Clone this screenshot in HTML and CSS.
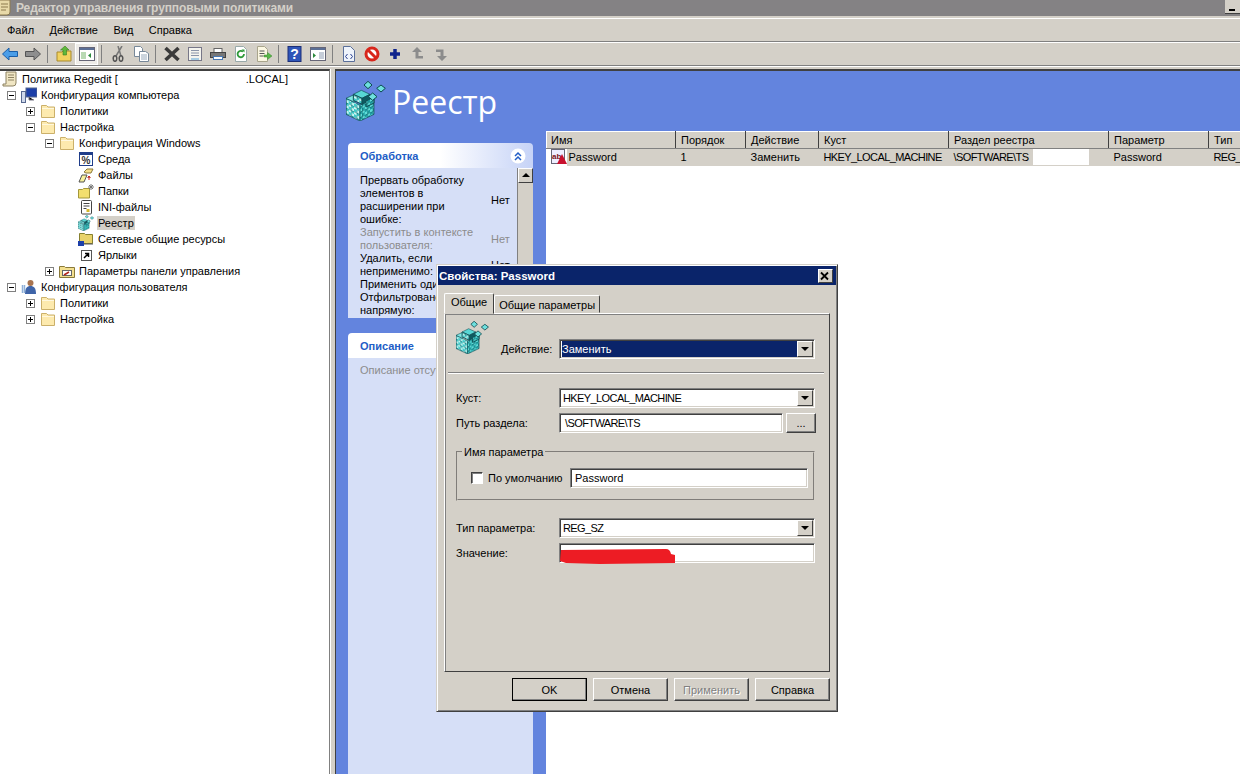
FILE: index.html
```html
<!DOCTYPE html>
<html>
  <head>
    <title>Редактор управления групповыми политиками</title>
    <meta charset="utf-8" />
    <link rel="stylesheet" href="styles.css">
  </head>
  <body>
    <svg class="sprite" width="0" height="0">
      <defs>
        <pattern id="chk-l" width="16" height="16" patternUnits="userSpaceOnUse" patternTransform="skewY(25)">
          <rect width="16" height="16" fill="#c4f6f2"/>
          <rect width="8" height="8" fill="#3ccaca"/>
          <rect x="8" y="8" width="8" height="8" fill="#3ccaca"/>
          <path d="M0 0H16M0 0V16" stroke="#0d4a50" stroke-width="2"/>
        </pattern>
        <pattern id="chk-r" width="16" height="16" patternUnits="userSpaceOnUse" patternTransform="skewY(-25)">
          <rect width="16" height="16" fill="#1d9ea2"/>
          <rect width="8" height="8" fill="#5fdcd8"/>
          <rect x="8" y="8" width="8" height="8" fill="#5fdcd8"/>
          <path d="M0 0H16M0 0V16" stroke="#0d4a50" stroke-width="2"/>
        </pattern>
      </defs>
      <symbol id="folder" viewBox="0 0 16 16">
        <path d="M1.500 2.500h5l1.500 1.500h6.500v10.500h-13z" fill="#fdeaae" stroke="#cbb06a"/>
        <path d="M2 5.500h12" stroke="#fff8de"/>
      </symbol>
      <symbol id="reg" viewBox="0 0 120 120">
        <path d="M0 52L42 72V120L0 100z" fill="url(#chk-l)" stroke="#0d4a50" stroke-width="2"/>
        <path d="M42 72L84 52V100L42 120z" fill="url(#chk-r)" stroke="#0d4a50" stroke-width="2"/>
        <path d="M0 52L22 42L42 52L22 62z" fill="#7fe6e2" stroke="#0d4a50" stroke-width="2"/>
        <path d="M22 40L46 28L72 40L48 52z" fill="#58d6d4" stroke="#0d4a50" stroke-width="2"/>
        <path d="M22 40V58L48 70V52z" fill="url(#chk-l)" stroke="#0d4a50" stroke-width="3"/>
        <path d="M48 52V70L72 58V40z" fill="#0d5a60" stroke="#0d4a50" stroke-width="2"/>
        <path d="M60 60L84 48V66L60 78z" fill="url(#chk-r)" stroke="#0d4a50" stroke-width="3"/>
        <path d="M80 36l13 11l-13 11l-13-11zM66 1l12 11l-12 11l-12-11zM105 12l13 10l-13 11l-13-11z" fill="#6ee0de" stroke="#0d4a50" stroke-width="3"/>
      </symbol>
    </svg>

    <div class="titlebar">
      <svg class="title-icon" viewBox="0 0 16 16"><path d="M3 0h11v12a3 3 0 0 1-3 3H0v-2h2z" fill="#e8d9a8" stroke="#8d7b4f"/><path d="M5 4h7M5 7h7M5 10h5" stroke="#8d7b4f"/></svg>
      <span class="title-text">Редактор управления групповыми политиками</span>
      <span class="min-btn"></span>
    </div>
    <div class="menubar">
      <span class="menu-item">Файл</span>
      <span class="menu-item">Действие</span>
      <span class="menu-item">Вид</span>
      <span class="menu-item">Справка</span>
    </div>
    <div class="toolbar">
      <span class="tool"><svg viewBox="0 0 16 16"><path d="M0.500 8L7 2v3.500h8.500v5H7V14z" fill="#4b9ee8" stroke="#1a5ea8"/></svg></span>
      <span class="tool"><svg viewBox="0 0 16 16"><path d="M15.500 8L9 2v3.500H0.500v5H9V14z" fill="#8e8e8e" stroke="#555"/></svg></span>
      <span class="tool-sep"></span>
      <span class="tool"><svg viewBox="0 0 16 16"><path d="M1 6h5l1-1h8v10H1z" fill="#f2d25f" stroke="#a98a2c"/><path d="M7 9V4H4.500L9 0l4 4h-2.500v5z" fill="#5fb83c" stroke="#3a7d1f" stroke-width=".6"/></svg></span>
      <span class="tool tool-on"><svg viewBox="0 0 16 16"><rect x="0.500" y="1.500" width="15" height="13" fill="#fff" stroke="#667"/><rect x="1" y="2" width="14" height="2" fill="#5b6f96"/><rect x="2" y="6" width="5" height="7" fill="#b9d9b4"/><path d="M12 7v5l-3-2.500z" fill="#2c8a3c"/></svg></span>
      <span class="tool-sep"></span>
      <span class="tool"><svg viewBox="0 0 16 16"><path d="M12 0L6 10M8 0l3 10" stroke="#777" stroke-width="1.500"/><ellipse cx="5" cy="12.500" rx="1.800" ry="2.800" fill="none" stroke="#555" stroke-width="1.500"/><ellipse cx="11" cy="12.500" rx="1.800" ry="2.800" fill="none" stroke="#555" stroke-width="1.500"/></svg></span>
      <span class="tool"><svg viewBox="0 0 16 16"><path d="M1.500 0.500h6l2 2v8h-8z" fill="#fff" stroke="#789"/><path d="M6.500 5.500h6l3 2v8h-9z" fill="#fff" stroke="#789"/><path d="M8 9h6M8 11h6M8 13h6" stroke="#9ab"/></svg></span>
      <span class="tool-sep"></span>
      <span class="tool"><svg viewBox="0 0 16 16"><path d="M1.500 2L14.500 14M14.500 2L1.500 14" stroke="#3a3a3a" stroke-width="3.600"/></svg></span>
      <span class="tool"><svg viewBox="0 0 16 16"><rect x="1.500" y="1.500" width="13" height="13" fill="#f4f4ee" stroke="#778"/><path d="M4 4.500h8M4 7h8M4 9.500h8" stroke="#8a94a8"/><path d="M4 13h8" stroke="#5aa5d8"/></svg></span>
      <span class="tool"><svg viewBox="0 0 16 16"><rect x="4" y="2.500" width="8" height="4" fill="#fff" stroke="#666"/><rect x="0.500" y="6.500" width="15" height="5" fill="#777" stroke="#444"/><rect x="3.500" y="10.500" width="9" height="3" fill="#fff" stroke="#4a7ab5"/></svg></span>
      <span class="tool"><svg viewBox="0 0 16 16"><path d="M2.500 0.500h8l3 3v12h-11z" fill="#fff" stroke="#9aa"/><path d="M11 8a3.200 3.200 0 1 1-1-2.300" fill="none" stroke="#2f9a3a" stroke-width="1.800"/><path d="M8.500 3.500h3v3z" fill="#2f9a3a"/></svg></span>
      <span class="tool"><svg viewBox="0 0 16 16"><path d="M1.500 0.500h7l3 3v12h-10z" fill="#fbf7e2" stroke="#a9a58c"/><path d="M3.500 5h5M3.500 7.500h5M3.500 10h4" stroke="#555"/><path d="M8 9h3.500V6.500L16 10l-4.500 3.500V11H8z" fill="#58b848" stroke="#3c8a30" stroke-width=".5"/></svg></span>
      <span class="tool-sep"></span>
      <span class="tool"><svg viewBox="0 0 16 16"><rect x="1" y="0.500" width="13" height="15" fill="#2f55b8" stroke="#1c2f78"/><text x="7.500" y="13" class="help-mark">?</text></svg></span>
      <span class="tool"><svg viewBox="0 0 16 16"><rect x="0.500" y="1.500" width="15" height="13" fill="#fff" stroke="#667"/><rect x="1" y="2" width="14" height="2" fill="#5b6f96"/><rect x="9" y="6" width="5" height="7" fill="#c6cdd8"/><path d="M3 7v5l3-2.500z" fill="#2c8a3c"/></svg></span>
      <span class="tool-sep"></span>
      <span class="tool"><svg viewBox="0 0 16 16"><path d="M2.500 0.500h7l4 4v11h-11z" fill="#eef3fb" stroke="#5a6f9a"/><path d="M6.500 8L4.500 10.500l2 2.500M9.500 8l2 2.500l-2 2.500" fill="none" stroke="#2a3f8f"/></svg></span>
      <span class="tool"><svg viewBox="0 0 16 16"><circle cx="8" cy="8" r="6" fill="#fff" stroke="#d8261c" stroke-width="3"/><path d="M4 4l8 8" stroke="#d8261c" stroke-width="3"/></svg></span>
      <span class="tool"><svg viewBox="0 0 16 16"><path d="M8 3v10M3 8h10" stroke="#10248c" stroke-width="3.500"/></svg></span>
      <span class="tool"><svg viewBox="0 0 16 16"><path d="M7 1L2 6h3.500v6.500H13V10H8.500V6H12z" fill="#8c8c8c"/></svg></span>
      <span class="tool"><svg viewBox="0 0 16 16"><path d="M9 15l5-5h-3.500V3.500H3V6h4.500v4H4z" fill="#8c8c8c"/></svg></span>
    </div>

    <div class="main">
      <div class="tree">
        <div class="row row-root">
          <svg class="ico" viewBox="0 0 16 16"><path d="M4 1h10v11a3 3 0 0 1-3 3H1v-2h3z" fill="#f0e6c4" stroke="#8d8262"/><path d="M6 4h6M6 6.500h6M6 9h6" stroke="#8d8262"/></svg>
          <span>Политика Regedit [<span class="blank"></span>.LOCAL]</span>
        </div>
        <div class="row lvl0"><span class="exp"></span>
          <svg class="ico" viewBox="0 0 16 16"><rect x="5" y="1" width="11" height="9" fill="#1c3fa8" stroke="#56688f"/><path d="M8 10v3h5" stroke="#778"/><rect x="0.500" y="4.500" width="4" height="11" fill="#cfd8ea" stroke="#56688f"/></svg>
          <span>Конфигурация компьютера</span></div>
        <div class="row lvl1"><span class="exp exp-plus"></span><svg class="ico"><use href="#folder"/></svg><span>Политики</span></div>
        <div class="row lvl1"><span class="exp"></span><svg class="ico"><use href="#folder"/></svg><span>Настройка</span></div>
        <div class="row lvl2"><span class="exp"></span><svg class="ico"><use href="#folder"/></svg><span>Конфигурация Windows</span></div>
        <div class="row lvl3"><span class="exp exp-none"></span>
          <svg class="ico" viewBox="0 0 16 16"><rect x="1.500" y="1.500" width="13" height="13" fill="#fff" stroke="#1f3d8a"/><rect x="2" y="2" width="12" height="2" fill="#1f3d8a"/><text x="8" y="13" class="pct">%</text></svg>
          <span>Среда</span></div>
        <div class="row lvl3"><span class="exp exp-none"></span>
          <svg class="ico" viewBox="0 0 16 16"><path d="M1 15l3-7h5l-3 7z" fill="#f6ef9a" stroke="#555"/><path d="M6 5l3-3h6l-2 4H8z" fill="#f6df8a" stroke="#8a7a3a"/><path d="M11 9v4M9.500 10.500L11 9l1.500 1.500" stroke="#d8261c"/></svg>
          <span>Файлы</span></div>
        <div class="row lvl3"><span class="exp exp-none"></span>
          <svg class="ico" viewBox="0 0 16 16"><path d="M0.500 6.500h4l1-1h6v9.500h-11z" fill="#f2df6e" stroke="#a4983a"/><path d="M13 1v6M10 4h6M11 2l4 4M15 2l-4 4" stroke="#777"/></svg>
          <span>Папки</span></div>
        <div class="row lvl3"><span class="exp exp-none"></span>
          <svg class="ico" viewBox="0 0 16 16"><rect x="3.500" y="1.500" width="10" height="13.500" rx="1" fill="#fff" stroke="#444"/><path d="M5.500 4.500h6M5.500 7h6M5.500 9.500h3" stroke="#444"/><rect x="8.500" y="10" width="3" height="3" fill="#d4b72a"/></svg>
          <span>INI-файлы</span></div>
        <div class="row lvl3"><span class="exp exp-none"></span><svg class="ico"><use href="#reg"/></svg><span class="sel">Реестр</span></div>
        <div class="row lvl3"><span class="exp exp-none"></span>
          <svg class="ico" viewBox="0 0 16 16"><path d="M1.500 2.500h5l1 1h7v9h-13z" fill="#e9d36a" stroke="#86802f"/><rect x="0" y="10" width="6" height="5" fill="#1c3fa8"/><path d="M6 13h9" stroke="#555"/></svg>
          <span>Сетевые общие ресурсы</span></div>
        <div class="row lvl3"><span class="exp exp-none"></span>
          <svg class="ico" viewBox="0 0 16 16"><rect x="3.500" y="3.500" width="10" height="10" fill="#fff" stroke="#555"/><path d="M6 11l4-4M7 6.500h3.500V10" fill="none" stroke="#000" stroke-width="1.500"/></svg>
          <span>Ярлыки</span></div>
        <div class="row lvl2"><span class="exp exp-plus"></span>
          <svg class="ico" viewBox="0 0 16 16"><path d="M0.500 3.500h5l1 1h9v10h-15z" fill="#f3df8f" stroke="#8a7a3a"/><rect x="3.500" y="7.500" width="9" height="5" fill="#fff" stroke="#666"/><path d="M5 12l5-3" stroke="#b3261c" stroke-width="1.500"/></svg>
          <span>Параметры панели управления</span></div>
        <div class="row lvl0"><span class="exp"></span>
          <svg class="ico" viewBox="0 0 16 16"><circle cx="9.500" cy="4" r="3" fill="#a8744f"/><path d="M4 15c0-6 2-8 5.500-8s5.500 2 5.500 8z" fill="#3f64a8"/><path d="M1.500 6v8M3.500 6v8" stroke="#8fb0d8" stroke-width="1.500"/></svg>
          <span>Конфигурация пользователя</span></div>
        <div class="row lvl1"><span class="exp exp-plus"></span><svg class="ico"><use href="#folder"/></svg><span>Политики</span></div>
        <div class="row lvl1"><span class="exp exp-plus"></span><svg class="ico"><use href="#folder"/></svg><span>Настройка</span></div>
      </div>
      <div class="splitter"></div>
      <div class="panel">
        <div class="panel-head">
          <svg class="head-icon"><use href="#reg"/></svg>
          <h1>Реестр</h1>
        </div>
        <div class="panel-body">
          <div class="tasks">
            <div class="task-head">
              <span>Обработка</span>
              <span class="chevron"><svg viewBox="0 0 16 16"><circle cx="8" cy="8" r="7.500" fill="#fff"/><path d="M5 8l3-3l3 3M5 12l3-3l3 3" fill="none" stroke="#215dc6" stroke-width="1.500"/></svg></span>
            </div>
            <div class="task-body">
              <div class="props">
                <div class="prop"><span class="prop-name">Прервать обработку элементов в расширении при ошибке:</span><span class="prop-val">Нет</span></div>
                <div class="prop prop-off"><span class="prop-name">Запустить в контексте пользователя:</span><span class="prop-val">Нет</span></div>
                <div class="prop"><span class="prop-name">Удалить, если неприменимо:</span><span class="prop-val">Нет</span></div>
                <div class="prop"><span class="prop-name prop-cut">Применить один раз:</span></div>
                <div class="prop"><span class="prop-name">Отфильтровано напрямую:</span></div>
              </div>
              <div class="scroll">
                <span class="scroll-btn"></span>
              </div>
            </div>
            <div class="task-head task-head2"><span>Описание</span></div>
            <div class="desc">Описание отсутствует</div>
          </div>
          <div class="list">
            <table>
              <colgroup>
                <col class="c-name"><col class="c-order"><col class="c-act"><col class="c-hive"><col class="c-key"><col class="c-param"><col class="c-type">
              </colgroup>
              <thead>
                <tr><th>Имя</th><th>Порядок</th><th>Действие</th><th>Куст</th><th>Раздел реестра</th><th>Параметр</th><th>Тип</th></tr>
              </thead>
              <tbody>
                <tr>
                  <td class="td-name"><span class="row-icon"><svg viewBox="0 0 16 16"><rect x="0.500" y="0.500" width="13" height="14" fill="#eef" stroke="#667"/><text x="1" y="10" class="ab">ab</text><path d="M11 5l5 10H6z" fill="#c8102e"/></svg></span><span class="name-text">Password</span></td>
                  <td>1</td><td>Заменить</td><td class="caps">HKEY_LOCAL_MACHINE</td>
                  <td class="caps">\SOFTWARE\TS<span class="smear"></span></td><td>Password</td><td class="caps">REG_SZ</td>
                </tr>
              </tbody>
            </table>
          </div>
        </div>
      </div>
    </div>

    <div class="dialog">
      <div class="dlg-title"><span>Свойства: Password</span><span class="dlg-close"><svg viewBox="0 0 12 12"><path d="M2 2.500L9 9.500M9 2.500L2 9.500" stroke="#000" stroke-width="1.800"/></svg></span></div>
      <div class="tabs">
        <span class="tab tab-on">Общие</span>
        <span class="tab">Общие параметры</span>
      </div>
      <div class="tab-panel">
        <div class="action-row">
          <svg class="act-icon"><use href="#reg"/></svg>
          <label class="act-label">Действие:</label>
          <div class="combo combo-sel"><span class="combo-text">Заменить</span><span class="arrow"></span></div>
        </div>
        <div class="sep"></div>
        <div class="form-row form-first"><label>Куст:</label><div class="combo"><span class="combo-text caps">HKEY_LOCAL_MACHINE</span><span class="arrow"></span></div></div>
        <div class="form-row"><label>Путь раздела:</label><div class="field field-path caps">\SOFTWARE\TS</div><button class="btn btn-more">...</button></div>
        <fieldset class="group">
          <legend>Имя параметра</legend>
          <span class="check"></span><label class="check-label">По умолчанию</label>
          <div class="field field-name">Password</div>
        </fieldset>
        <div class="form-row form-type"><label>Тип параметра:</label><div class="combo"><span class="combo-text caps">REG_SZ</span><span class="arrow"></span></div></div>
        <div class="form-row"><label>Значение:</label><div class="field field-value">
          <svg class="scribble" viewBox="0 0 116 16"><path d="M1 2L106 1Q110 1 111 6L115 7V15L40 16L6 15L0 13z" fill="#ed1c24"/></svg>
        </div></div>
      </div>
      <div class="dlg-buttons">
        <button class="btn btn-default">OK</button>
        <button class="btn">Отмена</button>
        <button class="btn btn-off">Применить</button>
        <button class="btn">Справка</button>
      </div>
    </div>
  </body>
</html>
```

FILE: styles.css
```css
html, body {
  margin: 0;
  height: 774px;
  overflow: hidden;
}
body {
  position: relative;
  display: flex;
  flex-direction: column;
  background: #d4d0c8;
  font-family: "Liberation Sans", Arial, sans-serif;
  font-size: 11px;
  color: #000;
}
.sprite {
  position: absolute;
}
.caps {
  letter-spacing: -0.6px;
}

/* top bars */
.titlebar {
  height: 16px;
  flex: none;
  display: flex;
  align-items: center;
  background: #848284;
  border-bottom: 2px solid #d4d0c8;
  color: #d4d0c8;
  font-size: 12px;
  letter-spacing: -0.12px;
  font-weight: bold;
}
.title-icon {
  width: 16px;
  height: 16px;
  margin-left: -4px;
  margin-right: 4px;
}
.title-text {
  flex: 1;
}
.min-btn {
  width: 15px;
  height: 13px;
  margin-bottom: 3px;
  background: #d4d0c8;
  border-bottom: 1px solid #404040;
  position: relative;
}
.min-btn::after {
  content: "";
  position: absolute;
  left: 4px;
  bottom: 2px;
  width: 6px;
  height: 2px;
  background: #000;
}
.menubar {
  height: 22px;
  flex: none;
  display: flex;
  align-items: center;
  gap: 15.500px;
  padding-left: 7px;
  border-top: 1px solid #fff;
  border-bottom: 1px solid #808080;
}
.toolbar {
  height: 22px;
  flex: none;
  display: flex;
  align-items: center;
  margin-left: -2px;
  border-top: 1px solid #fff;
  border-bottom: 1px solid #808080;
}
.tool {
  width: 23px;
  height: 22px;
  display: flex;
  align-items: center;
  justify-content: center;
}
.tool svg {
  width: 16px;
  height: 16px;
}
.tool-on {
  background: #eeece8;
  border: 1px solid #fff;
  box-sizing: border-box;
}
.tool-sep {
  width: 8px;
  height: 18px;
  background: linear-gradient(#808080, #808080) 3px 0 / 1px 100% no-repeat;
}
.help-mark {
  font: bold 14px "Liberation Sans", sans-serif;
  fill: #fff;
  text-anchor: middle;
}
.pct {
  font: bold 10px "Liberation Sans", sans-serif;
  fill: #333;
  text-anchor: middle;
}

/* main area */
.main {
  flex: 1;
  min-height: 0;
  display: flex;
  border-top: 1px solid #fff;
  padding-top: 2px;
}
.tree {
  width: 329px;
  background: #fff;
  border-top: 2px solid #404040;
  border-right: 1px solid #808080;
}
.row {
  height: 16px;
  display: flex;
  align-items: center;
  white-space: nowrap;
}
.row-root { padding-left: 2px; }
.lvl0 { padding-left: 6px; }
.lvl1 { padding-left: 25px; }
.lvl2 { padding-left: 44px; }
.lvl3 { padding-left: 63px; }
.ico {
  width: 16px;
  height: 16px;
  margin-right: 4px;
  flex: none;
}
.exp {
  width: 9px;
  height: 9px;
  margin: 0 5px 0 1px;
  flex: none;
  box-sizing: border-box;
  border: 1px solid #808080;
  background: linear-gradient(#000, #000) center / 5px 1px no-repeat;
}
.exp-plus {
  background:
    linear-gradient(#000, #000) center / 5px 1px no-repeat,
    linear-gradient(#000, #000) center / 1px 5px no-repeat;
}
.exp-none {
  visibility: hidden;
}
.blank {
  display: inline-block;
  width: 128px;
}
.sel {
  background: #d4d0c8;
  margin-left: -1px;
  padding: 1px;
}
.splitter {
  width: 5px;
  flex: none;
  border-left: 1px solid #fff;
  box-sizing: border-box;
}
.panel {
  flex: 1;
  min-width: 0;
  background: #6384de;
  border-top: 2px solid #404040;
  border-left: 1px solid #404040;
  display: flex;
  flex-direction: column;
}
.panel-head {
  height: 60px;
  flex: none;
  display: flex;
  align-items: center;
  padding-left: 10px;
}
.head-icon {
  width: 40px;
  height: 40px;
  margin-right: 6px;
}
h1 {
  margin: 0;
  font: normal 32px "Open Sans", sans-serif;
  color: #fff;
}
.panel-body {
  flex: 1;
  min-height: 0;
  display: flex;
  gap: 13px;
  padding-left: 12px;
}
.tasks {
  width: 185px;
  flex: none;
  padding-top: 12px;
  display: flex;
  flex-direction: column;
}
.task-head {
  height: 25px;
  flex: none;
  display: flex;
  align-items: center;
  justify-content: space-between;
  box-sizing: border-box;
  padding: 1px 7px 0 12px;
  background: linear-gradient(90deg, #fff 50%, #c6d3f7);
  border-radius: 4px 4px 0 0;
  font-weight: bold;
  color: #215dc6;
}
.task-head2 {
  margin-top: 15px;
}
.chevron svg {
  display: block;
  width: 16px;
  height: 16px;
}
.task-body {
  height: 150px;
  flex: none;
  display: flex;
  background: #d6dff7;
  overflow: hidden;
}
.props {
  flex: 1;
  padding: 6px 0 0 12px;
  line-height: 13px;
}
.prop {
  display: flex;
  align-items: center;
}
.prop-name {
  width: 122px;
  margin-right: 9px;
  flex: none;
}
.prop-cut {
  white-space: nowrap;
}
.prop-off {
  color: #8c8c8c;
}
.scroll {
  width: 16px;
  flex: none;
  background: #d4d0c8;
  border-left: 1px solid #808080;
  box-sizing: border-box;
}
.scroll-btn {
  display: block;
  height: 15px;
  border: 1px solid;
  border-color: #fff #404040 #404040 #fff;
  box-sizing: border-box;
  position: relative;
}
.scroll-btn::after {
  content: "";
  position: absolute;
  left: 3px;
  top: 4px;
  border: 4px solid transparent;
  border-top: 0;
  border-bottom-color: #000;
}
.desc {
  flex: 1;
  background: #d6dff7;
  padding: 6px 12px;
  color: #8c8c8c;
  white-space: nowrap;
  overflow: hidden;
}
.list {
  flex: 1;
  min-width: 0;
  background: #fff;
  overflow: hidden;
}
table {
  table-layout: fixed;
  width: 694px;
  border-collapse: collapse;
  font-size: 11px;
}
.c-name { width: 129px; }
.c-order { width: 70px; }
.c-act { width: 73px; }
.c-hive { width: 130px; }
.c-key { width: 160px; }
.c-param { width: 100px; }
.c-type { width: 32px; }
th {
  height: 17px;
  padding: 0 0 0 5px;
  font-weight: normal;
  text-align: left;
  background: #d4d0c8;
  border: 1px solid;
  border-color: #fff #404040 #808080 #fff;
  box-sizing: border-box;
}
th:first-child {
  padding-left: 4px;
}
td {
  height: 17px;
  padding: 0 0 0 5px;
  line-height: 17px;
  background: #d4d0c8;
  white-space: nowrap;
  overflow: hidden;
  position: relative;
}
.td-name {
  padding: 0;
}
.row-icon {
  display: inline-block;
  width: 20px;
  height: 17px;
  background: #fff;
  vertical-align: top;
}
.row-icon svg {
  display: block;
  width: 16px;
  height: 16px;
  margin-left: 4px;
}
.ab {
  font: bold 8px "Liberation Sans", sans-serif;
  fill: #7a1020;
}
.name-text {
  padding-left: 2px;
}
.smear {
  position: absolute;
  left: 84px;
  top: 0;
  width: 56px;
  height: 16px;
  background: #fff;
}

/* properties dialog */
.dialog {
  position: absolute;
  left: 436px;
  top: 264px;
  width: 402px;
  height: 448px;
  box-sizing: border-box;
  padding: 2px;
  background: #d4d0c8;
  border: 1px solid;
  border-color: #d4d0c8 #404040 #404040 #d4d0c8;
  box-shadow: inset 1px 1px #fff, inset -1px -1px #808080;
}
.dlg-title {
  height: 19px;
  margin: -1px -1px 0;
  display: flex;
  align-items: center;
  justify-content: space-between;
  padding: 0 3px 0 1px;
  background: #0a246a;
  color: #fff;
  font-weight: bold;
  font-size: 11.500px;
}
.dlg-close {
  width: 15px;
  height: 14px;
  background: #d4d0c8;
  border: 1px solid;
  border-color: #fff #404040 #404040 #fff;
  box-sizing: border-box;
}
.dlg-close svg {
  display: block;
  width: 12px;
  height: 12px;
}
.tabs {
  display: flex;
  align-items: flex-end;
  height: 28px;
  padding-left: 5px;
}
.tab {
  height: 18px;
  padding: 0 4px;
  line-height: 18px;
  border: 1px solid;
  border-color: #fff #404040 #d4d0c8 #fff;
  border-radius: 2px 2px 0 0;
  box-sizing: border-box;
}
.tab-on {
  height: 21px;
  padding: 0 6px;
  line-height: 17px;
  margin-bottom: -1px;
  position: relative;
  background: #d4d0c8;
}
.tab-panel {
  height: 359px;
  margin-left: 5px;
  width: 386px;
  box-sizing: border-box;
  padding: 7px 14px 0 11px;
  border: 1px solid;
  border-color: #fff #404040 #404040 #fff;
  box-shadow: 1px 1px #808080 inset;
}
.action-row {
  display: flex;
  align-items: flex-end;
  height: 38px;
}
.act-icon {
  width: 33px;
  height: 33px;
  margin-right: 12px;
  align-self: flex-start;
}
.act-label {
  width: 58px;
  line-height: 20px;
}
.combo, .field {
  flex: 1;
  height: 20px;
  min-width: 0;
  display: flex;
  align-items: center;
  box-sizing: border-box;
  background: #fff;
  border: 1px solid;
  border-color: #808080 #fff #fff #808080;
  box-shadow: inset 1px 1px #404040, inset -1px -1px #d4d0c8;
  padding-left: 3px;
  position: relative;
}
.combo-text {
  flex: 1;
}
.combo-sel .combo-text {
  background: #0a246a;
  color: #fff;
  margin-left: -1px;
  line-height: 16px;
}
.arrow {
  width: 16px;
  height: 16px;
  margin-right: 1px;
  flex: none;
  box-sizing: border-box;
  background: #d4d0c8;
  border: 1px solid;
  border-color: #fff #404040 #404040 #fff;
  position: relative;
}
.arrow::after {
  content: "";
  position: absolute;
  left: 3px;
  top: 5px;
  border: 4px solid transparent;
  border-bottom: 0;
  border-top-color: #000;
}
.sep {
  height: 2px;
  margin: 13px -9px 0 -8px;
  background: #808080;
  border-bottom: 1px solid #fff;
  box-sizing: border-box;
}
.form-row {
  display: flex;
  align-items: center;
  margin-top: 5px;
}
.form-row label {
  width: 103px;
  flex: none;
}
.form-first {
  margin-top: 14px;
}
.form-type {
  margin-top: 17px;
}
.field-path {
  flex: none;
  width: 224px;
  padding-left: 5px;
}
.btn {
  width: 75px;
  height: 23px;
  padding: 0;
  background: #d4d0c8;
  border: 1px solid;
  border-color: #fff #404040 #404040 #fff;
  box-shadow: inset -1px -1px #808080;
  font: 11px "Liberation Sans", sans-serif;
  color: #000;
}
.btn-more {
  width: 30px;
  height: 20px;
  margin-left: 3px;
  margin-right: -1px;
}
.btn-default {
  outline: 1px solid #000;
  outline-offset: -1px;
}
.btn-off {
  color: #808080;
  text-shadow: 1px 1px #fff;
}
.group {
  margin: 13px 0 0;
  padding: 0 5px 2px 13px;
  height: 55px;
  box-sizing: border-box;
  display: flex;
  align-items: center;
  border: 2px groove #d4d0c8;
}
legend {
  margin-left: -9px;
  padding: 0 2px;
}
.check {
  display: inline-block;
  width: 12px;
  height: 12px;
  flex: none;
  box-sizing: border-box;
  background: #fff;
  border: 1px solid;
  border-color: #404040 #fff #fff #404040;
  box-shadow: 1px 1px #808080 inset;
}
.check-label {
  margin-left: 5px;
  width: 82px;
  flex: none;
}
.field-name {
  flex: 1;
  padding-left: 4px;
}
.scribble {
  position: absolute;
  left: 0;
  top: 4px;
  width: 116px;
  height: 16px;
}
.dlg-buttons {
  display: flex;
  justify-content: flex-end;
  gap: 6px;
  margin-top: 6px;
  padding-right: 5px;
}
```
